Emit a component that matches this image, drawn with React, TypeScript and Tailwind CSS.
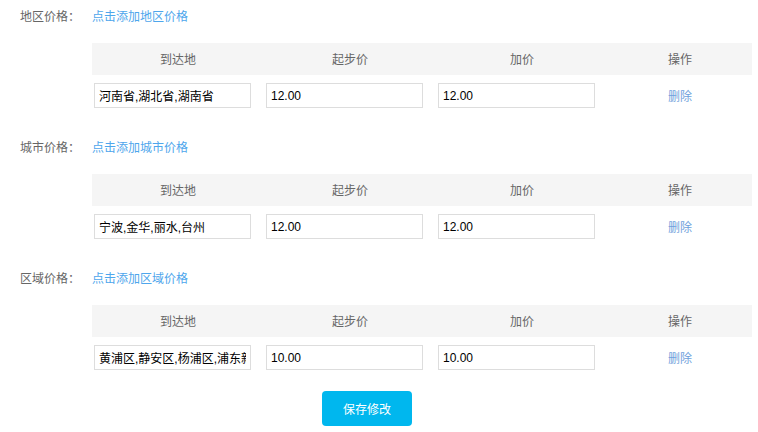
import React from "react";

type Section = { label: string; link: string; dest: string; start: string; add: string };

const sections: Section[] = [
  { label: "地区价格：", link: "点击添加地区价格", dest: "河南省,湖北省,湖南省", start: "12.00", add: "12.00" },
  { label: "城市价格：", link: "点击添加城市价格", dest: "宁波,金华,丽水,台州", start: "12.00", add: "12.00" },
  { label: "区域价格：", link: "点击添加区域价格", dest: "黄浦区,静安区,杨浦区,浦东新区", start: "10.00", add: "10.00" },
];

function Field({ value }: { value: string }) {
  return (
    <input
      readOnly
      value={value}
      className="ml-[2px] h-[25px] w-[157px] border border-[#dddddd] bg-white px-[4px] font-['Liberation_Sans','Noto_Sans_CJK_SC',sans-serif] text-[12px] text-black outline-none"
    />
  );
}

export default function App() {
  return (
    <div
      className="w-[758px] h-[432px] bg-white overflow-hidden"
      style={{ fontFamily: '"Noto Sans CJK SC", "Liberation Sans", sans-serif' }}
    >
      {sections.map((s, i) => (
        <div key={i} className="h-[131px]">
          <div className="flex h-[32px] items-center text-[12px]">
            <span className="ml-[20px] w-[72px] text-[#666666]">{s.label}</span>
            <span className="text-[#4ea6ec]">{s.link}</span>
          </div>
          <div className="ml-[92px] mt-[11px] w-[660px]">
            <div className="grid h-[32px] grid-cols-[172px_172px_172px_144px] items-center bg-[#f5f5f5] text-center text-[12px] text-[#666666]">
              <span>到达地</span>
              <span>起步价</span>
              <span>加价</span>
              <span>操作</span>
            </div>
            <div className="mt-[8px] grid grid-cols-[172px_172px_172px_144px] items-center">
              <Field value={s.dest} />
              <Field value={s.start} />
              <Field value={s.add} />
              <span className="text-center text-[12px] text-[#6f9fdc]">删除</span>
            </div>
          </div>
        </div>
      ))}
      <div className="-mt-[2px] pl-[322px]">
        <button className="h-[35px] w-[90px] rounded-[4px] bg-[#00b7ee] text-[12px] text-white">
          保存修改
        </button>
      </div>
    </div>
  );
}
